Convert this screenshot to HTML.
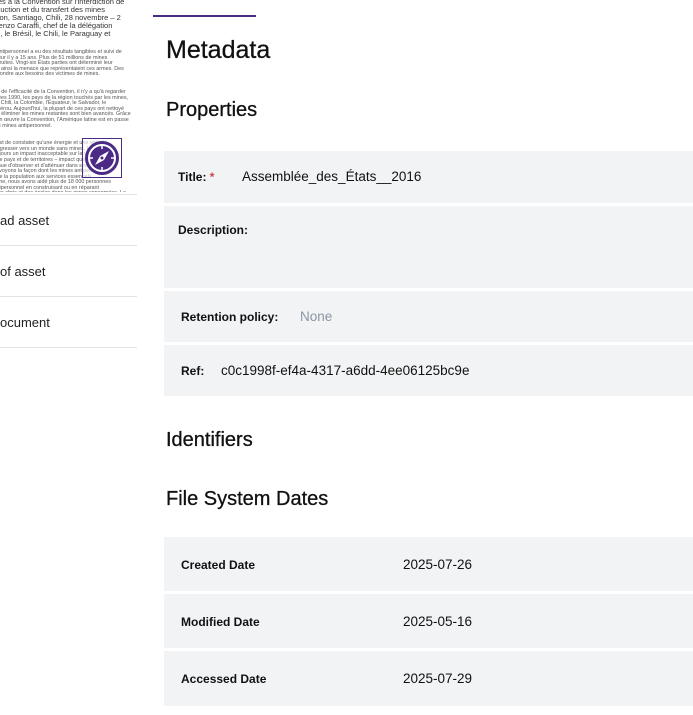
<!DOCTYPE html>
<html><head><meta charset="utf-8"><style>
*{margin:0;padding:0;box-sizing:border-box}
body{width:693px;height:715px;overflow:hidden;background:#fff;font-family:"Liberation Sans",sans-serif;color:#111;position:relative}
.a{position:absolute}
.doc{left:0;top:0;width:137px;height:192px;overflow:hidden;font-size:5.4px;line-height:5.6px;color:#555;font-family:"Liberation Sans",sans-serif}
.doc p{margin-left:-8px;width:152px;white-space:nowrap}
.side{left:0;width:137px;height:51px;border-bottom:1px solid #e3e3e3;font-size:13px;color:#222;padding-top:18px}
h1{position:absolute;left:166px;top:36px;font-size:25px;font-weight:normal;color:#111;-webkit-text-stroke:0.3px #111}
h2{position:absolute;left:166px;font-size:20px;font-weight:normal;color:#111;-webkit-text-stroke:0.3px #111}
.row{position:absolute;left:164px;width:529px;background:#f2f3f5;font-size:13.5px}
.row b{position:absolute;font-weight:bold;font-size:12px}
.row span{position:absolute}
</style></head><body>
<div class="a doc">
<p style="font-size:7.5px;line-height:8px;color:#333;margin-top:-2px">ales à la Convention sur l'interdiction de<br>oduction et du transfert des mines<br>ction, Santiago, Chili, 28 novembre – 2<br>orenzo Caraffi, chef de la délégation<br>ne, le Brésil, le Chili, le Paraguay et</p>
<p style="margin-top:12px">e antipersonnel a eu des résultats tangibles et suivi de<br>gueur il y a 15 ans. Plus de 51 millions de mines<br>détruites. Vingt-six États parties ont déterminé leur<br>ant ainsi la menace que représentaient ces armes. Des<br>répondre aux besoins des victimes de mines.</p>
<p style="margin-top:12px">ure de l'efficacité de la Convention, il n'y a qu'à regarder<br>nnées 1990, les pays de la région touchés par les mines,<br>, le Chili, la Colombie, l'Équateur, le Salvador, le<br>e Pérou. Aujourd'hui, la plupart de ces pays ont nettoyé<br>our éliminer les mines restantes sont bien avancés. Grâce<br>n en œuvre la Convention, l'Amérique latine est en passe<br>des mines antipersonnel.</p>
<p style="margin-top:12px">e est de constater qu'une énergie et une volonté<br>progresser vers un monde sans mines. Les mines<br>toujours un impact inacceptable sur la vie civile<br>e de pays et de territoires – impact que les<br>ntinue d'observer et d'atténuer dans ses<br>us voyons la façon dont les mines antipersonnel<br>e de la population aux services essentiels<br>lenne, nous avons aidé plus de 18 000 personnes<br>antipersonnel en construisant ou en réparant<br>, des abris et des écoles dans les zones concernées. Le<br>gion trouvé entre le gouvernement colombien et les<br>pilotes de déminage dans le cadre du processus de paix.</p>
</div>
<div class="a" style="left:82px;top:138px;width:40px;height:40px;border:1.5px solid #4b2a85;background:rgba(255,255,255,.6)">
<svg width="38" height="38" viewBox="0 0 38 38" style="position:absolute;left:0;top:0"><circle cx="19" cy="19" r="17" fill="#4b2a85"/><circle cx="19" cy="19" r="13" fill="none" stroke="#fff" stroke-width="2"/><path d="M19 6v4M19 28v4M6 19h4M28 19h4" stroke="#fff" stroke-width="1.5"/><path d="M26 12L17 17L12 26L21 21Z" fill="#fff"/><circle cx="19" cy="19" r="1.5" fill="#4b2a85"/></svg></div>
<div class="a side" style="top:194px;border-top:1px solid #e3e3e3;height:52px">ad asset</div>
<div class="a side" style="top:246px">of asset</div>
<div class="a side" style="top:297px">ocument</div>
<div class="a" style="left:153px;top:15px;width:103px;height:2px;background:#4b2a85"></div>
<h1>Metadata</h1>
<h2 style="top:99px">Properties</h2>
<div class="row" style="top:151px;height:52px"><b style="left:14px;top:19px">Title: <span style="position:static;color:#c44">*</span></b><span style="left:78px;top:18px">Assemblée_des_États__2016</span></div>
<div class="row" style="top:206px;height:82px"><b style="left:14px;top:17px">Description:</b></div>
<div class="row" style="top:291px;height:51px"><b style="left:17px;top:19px">Retention policy:</b><span style="left:136px;top:18px;color:#8a96a3">None</span></div>
<div class="row" style="top:345px;height:51px"><b style="left:17px;top:19px">Ref:</b><span style="left:57px;top:18px">c0c1998f-ef4a-4317-a6dd-4ee06125bc9e</span></div>
<h2 style="top:429px">Identifiers</h2>
<h2 style="top:488px">File System Dates</h2>
<div class="row" style="top:537px;height:54px"><b style="left:17px;top:21px">Created Date</b><span style="left:239px;top:20px">2025-07-26</span></div>
<div class="row" style="top:594px;height:54px"><b style="left:17px;top:21px">Modified Date</b><span style="left:239px;top:20px">2025-05-16</span></div>
<div class="row" style="top:651px;height:55px"><b style="left:17px;top:21px">Accessed Date</b><span style="left:239px;top:20px">2025-07-29</span></div>
</body></html>
